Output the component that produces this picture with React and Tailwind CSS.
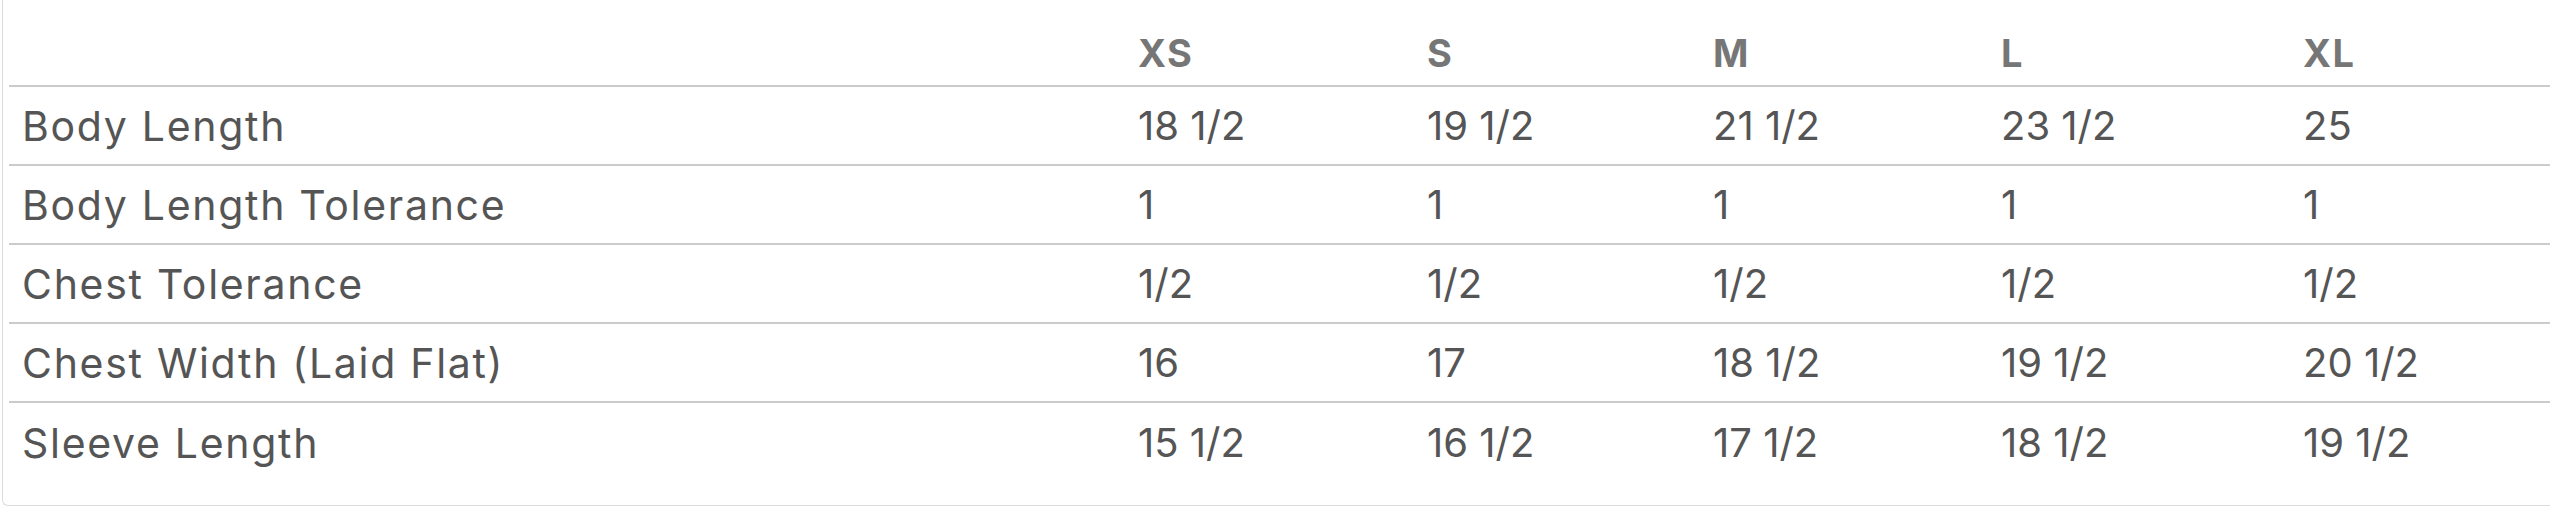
import React from "react";

const sizes = ["XS", "S", "M", "L", "XL"];
const rows = [
  ["Body Length", "18 1/2", "19 1/2", "21 1/2", "23 1/2", "25"],
  ["Body Length Tolerance", "1", "1", "1", "1", "1"],
  ["Chest Tolerance", "1/2", "1/2", "1/2", "1/2", "1/2"],
  ["Chest Width (Laid Flat)", "16", "17", "18 1/2", "19 1/2", "20 1/2"],
  ["Sleeve Length", "15 1/2", "16 1/2", "17 1/2", "18 1/2", "19 1/2"],
];

const grid = "grid grid-cols-[1115px_289px_286px_288px_302px_1fr]";

export default function App() {
  return (
    <div className="w-[2550px] h-[508px] bg-white overflow-hidden" style={{ fontFamily: "Inter, 'Open Sans', sans-serif" }}>
      <div className="ml-[2px] h-[506px] border-l border-b border-[#dcdcdc] rounded-bl-[6px] pl-[6px] pb-[22px]">
        <div className={`${grid} h-[87px] border-b-2 border-[#cbcbcb]`}>
          <div />
          {sizes.map((s) => (
            <div key={s} className="pl-[14px] pt-[31px] text-[38px] leading-[44px] font-bold tracking-[1.5px] text-[#767676]">
              {s}
            </div>
          ))}
        </div>
        {rows.map((r, i) => (
          <div
            key={r[0]}
            className={`${grid} h-[79px] items-center ${i < rows.length - 1 ? "border-b-2 border-[#cbcbcb]" : ""}`}
          >
            {r.map((c, j) => (
              <div
                key={j}
                className={
                  j === 0
                    ? "pl-[13px] text-[41px] leading-[48px] tracking-[1.7px] text-[#555555] whitespace-nowrap"
                    : "pl-[14px] text-[40px] leading-[48px] text-[#555555] whitespace-nowrap"
                }
              >
                {c}
              </div>
            ))}
          </div>
        ))}
      </div>
    </div>
  );
}
